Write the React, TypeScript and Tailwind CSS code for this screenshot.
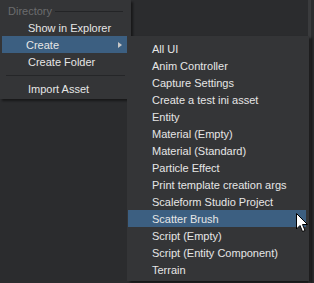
import React from "react";

const subItems = [
  "All UI",
  "Anim Controller",
  "Capture Settings",
  "Create a test ini asset",
  "Entity",
  "Material (Empty)",
  "Material (Standard)",
  "Particle Effect",
  "Print template creation args",
  "Scaleform Studio Project",
  "Scatter Brush",
  "Script (Empty)",
  "Script (Entity Component)",
  "Terrain",
];

export default function App() {
  return (
    <div
      className="relative w-[314px] h-[283px] overflow-hidden bg-[#2b2c2e] text-[11px] text-[#e6e6e6]"
      style={{ fontFamily: '"Liberation Sans", Arial, sans-serif' }}
    >
      {/* scrollbar strip of underlying panel */}
      <div className="absolute right-[3px] top-0 h-[283px] w-[3px] bg-[#3a3b3d]" />

      {/* first menu */}
      <div className="absolute left-0 top-0 w-[131px] h-[99px] bg-[#343537] shadow-[2px_2px_2px_rgba(0,0,0,0.45)] flex flex-col">
        <div className="h-[19px] flex items-center pl-[8px] pr-[8px] gap-[3px] pt-[3px]">
          <span className="text-[#6b6c6e]">Directory</span>
          <div className="flex-1 h-px bg-[#232426]" />
        </div>
        <div className="h-[17px] flex items-center pl-[26px] pt-px mx-[2px]">Show in Explorer</div>
        <div className="h-[17px] flex items-center pl-[24px] pt-px ml-[2px] mr-[4px] bg-[#3c5f81] relative">
          Create
          <svg className="absolute right-[5px] top-[6px]" width="4" height="6" viewBox="0 0 4 6">
            <path d="M0 0 L4 3 L0 6 Z" fill="#c8c8c8" />
          </svg>
        </div>
        <div className="h-[17px] flex items-center pl-[26px] pt-px mx-[2px]">Create Folder</div>
        <div className="h-[11px] flex items-center px-[6px]">
          <div className="flex-1 h-px bg-[#252628]" />
        </div>
        <div className="h-[17px] flex items-center pl-[26px] mx-[2px]">Import Asset</div>
      </div>

      {/* submenu */}
      <div className="absolute left-[127px] top-[36px] w-[182px] h-[245px] bg-[#343537] shadow-[3px_2px_2px_rgba(0,0,0,0.5)] flex flex-col pt-[4px]">
        {subItems.map((t) => (
          <div
            key={t}
            className={
              "h-[17px] flex items-center pl-[24px] pt-px ml-[1px] mr-[3px] whitespace-nowrap " +
              (t === "Scatter Brush" ? "bg-[#3c5f81]" : "")
            }
          >
            {t}
          </div>
        ))}
      </div>

      {/* mouse cursor */}
      <svg className="absolute left-[296px] top-[213px]" width="13" height="20" viewBox="0 0 13 20">
        <path
          d="M0.5 0.5 L0.5 16 L4 12.5 L6.5 18.5 L9 17.5 L6.5 11.5 L11.5 11.5 Z"
          fill="#ffffff"
          stroke="#000000"
          strokeWidth="1"
          strokeLinejoin="miter"
        />
      </svg>
    </div>
  );
}
